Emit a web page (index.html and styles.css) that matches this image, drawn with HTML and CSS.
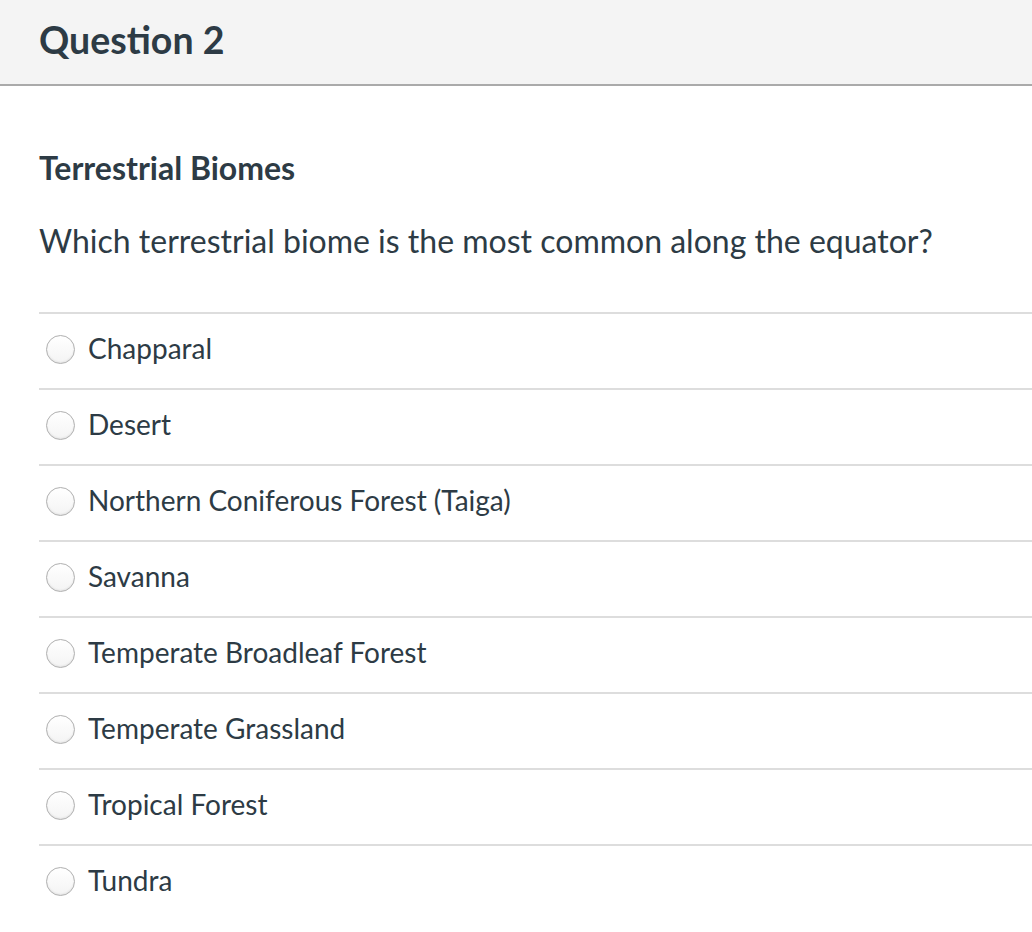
FILE: index.html
```html
<!DOCTYPE html>
<html>
<head>
<meta charset="utf-8">
<link rel="stylesheet" href="styles.css">
</head>
<body>
<div class="header"><h2 class="qnum">Question 2</h2></div>
<div class="content">
  <h3 class="title">Terrestrial Biomes</h3>
  <p class="qtext">Which terrestrial biome is the most common along the equator?</p>
  <div class="answers">
    <label class="answer"><span class="radio"></span><span class="atext">Chapparal</span></label>
    <label class="answer"><span class="radio"></span><span class="atext">Desert</span></label>
    <label class="answer"><span class="radio"></span><span class="atext">Northern Coniferous Forest (Taiga)</span></label>
    <label class="answer"><span class="radio"></span><span class="atext">Savanna</span></label>
    <label class="answer"><span class="radio"></span><span class="atext">Temperate Broadleaf Forest</span></label>
    <label class="answer"><span class="radio"></span><span class="atext">Temperate Grassland</span></label>
    <label class="answer"><span class="radio"></span><span class="atext">Tropical Forest</span></label>
    <label class="answer"><span class="radio"></span><span class="atext">Tundra</span></label>
  </div>
</div>
</body>
</html>
```
FILE: styles.css
```css
html, body {
  margin: 0;
  padding: 0;
  background: #fff;
  font-family: Lato, "Open Sans", sans-serif;
  color: #2d3b45;
}
.header {
  height: 84px;
  background: #f4f4f4;
  border-bottom: 2px solid #aaaaaa;
  padding-left: 39px;
  display: flex;
  align-items: center;
  box-sizing: content-box;
}
.qnum {
  margin: 0;
  font-size: 37.5px;
  font-weight: 700;
  line-height: 1;
  padding-bottom: 4px;
}
.content {
  padding-left: 39px;
}
.title {
  margin: 0;
  padding-top: 64px;
  font-size: 32px;
  font-weight: 700;
  line-height: 36px;
}
.qtext {
  margin: 0;
  padding-top: 37px;
  font-size: 32px;
  font-weight: 400;
  line-height: 36px;
}
.answers {
  margin-top: 53px;
}
.answer {
  display: flex;
  align-items: center;
  height: 71px;
  padding-bottom: 3px;
  border-top: 2px solid #dddddd;
  padding-left: 7px;
}
.radio {
  width: 27px;
  height: 27px;
  border-radius: 50%;
  border: 1px solid #b0b0b0;
  background: linear-gradient(#ffffff, #f4f4f4);
  box-shadow: inset 0 -1px 2px rgba(0,0,0,0.08);
  flex: none;
}
.atext {
  margin-left: 13px;
  font-size: 28px;
  line-height: 32px;
  padding-bottom: 3px;
}
```
